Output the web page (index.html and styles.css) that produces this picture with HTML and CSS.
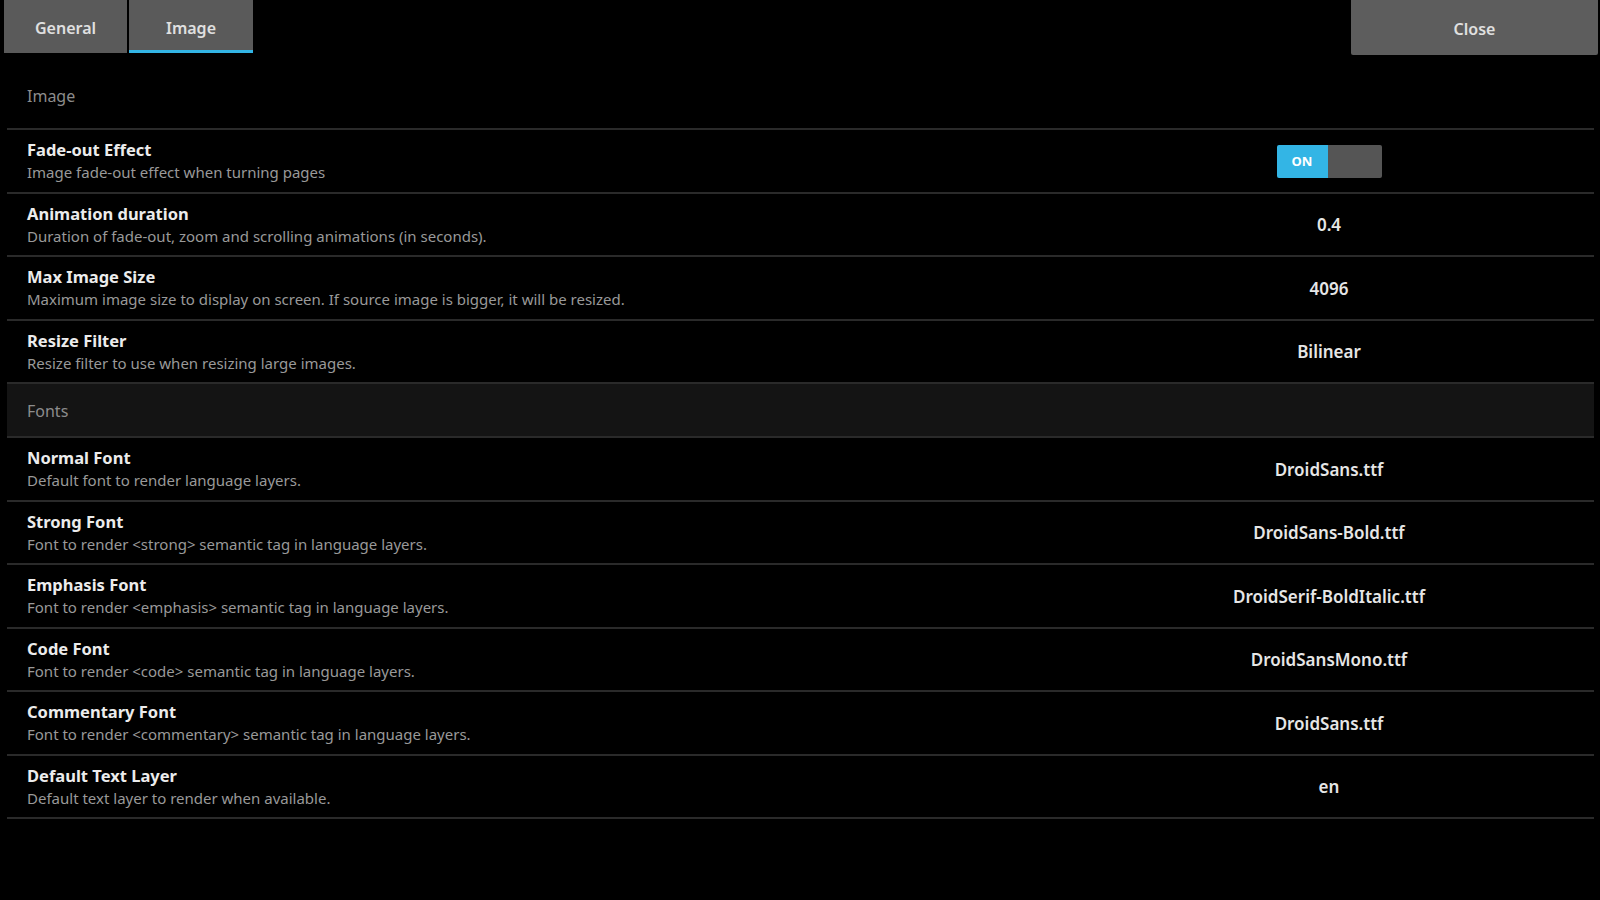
FILE: index.html
```html
<!DOCTYPE html>
<html lang="en">
<head>
<meta charset="utf-8">
<title>Settings - Image</title>
<link rel="stylesheet" href="styles.css">
</head>
<body>
<div class="topbar">
  <div class="tabs">
    <div class="tab">General</div>
    <div class="tab active">Image</div>
  </div>
  <div class="close">Close</div>
</div>

<div class="list">
  <div class="section first">Image</div>

  <div class="row">
    <div class="label">
      <div class="title">Fade-out Effect</div>
      <div class="desc">Image fade-out effect when turning pages</div>
    </div>
    <div class="value">
      <div class="toggle"><span class="on">ON</span><span class="off"></span></div>
    </div>
  </div>

  <div class="row">
    <div class="label">
      <div class="title">Animation duration</div>
      <div class="desc">Duration of fade-out, zoom and scrolling animations (in seconds).</div>
    </div>
    <div class="value">0.4</div>
  </div>

  <div class="row">
    <div class="label">
      <div class="title">Max Image Size</div>
      <div class="desc">Maximum image size to display on screen. If source image is bigger, it will be resized.</div>
    </div>
    <div class="value">4096</div>
  </div>

  <div class="row">
    <div class="label">
      <div class="title">Resize Filter</div>
      <div class="desc">Resize filter to use when resizing large images.</div>
    </div>
    <div class="value">Bilinear</div>
  </div>

  <div class="section band">Fonts</div>

  <div class="row">
    <div class="label">
      <div class="title">Normal Font</div>
      <div class="desc">Default font to render language layers.</div>
    </div>
    <div class="value">DroidSans.ttf</div>
  </div>

  <div class="row">
    <div class="label">
      <div class="title">Strong Font</div>
      <div class="desc">Font to render &lt;strong&gt; semantic tag in language layers.</div>
    </div>
    <div class="value">DroidSans-Bold.ttf</div>
  </div>

  <div class="row">
    <div class="label">
      <div class="title">Emphasis Font</div>
      <div class="desc">Font to render &lt;emphasis&gt; semantic tag in language layers.</div>
    </div>
    <div class="value">DroidSerif-BoldItalic.ttf</div>
  </div>

  <div class="row">
    <div class="label">
      <div class="title">Code Font</div>
      <div class="desc">Font to render &lt;code&gt; semantic tag in language layers.</div>
    </div>
    <div class="value">DroidSansMono.ttf</div>
  </div>

  <div class="row">
    <div class="label">
      <div class="title">Commentary Font</div>
      <div class="desc">Font to render &lt;commentary&gt; semantic tag in language layers.</div>
    </div>
    <div class="value">DroidSans.ttf</div>
  </div>

  <div class="row">
    <div class="label">
      <div class="title">Default Text Layer</div>
      <div class="desc">Default text layer to render when available.</div>
    </div>
    <div class="value">en</div>
  </div>
</div>
</body>
</html>
```

FILE: styles.css
```css
* { box-sizing: border-box; }

html, body {
  margin: 0;
  padding: 0;
  background: #000;
  width: 1600px;
  height: 900px;
  overflow: hidden;
}

body {
  font-family: "Noto Sans", "Open Sans", "DejaVu Sans", sans-serif;
  color: #e6e6e6;
}

.topbar {
  display: flex;
  justify-content: space-between;
  height: 55px;
}

.tabs {
  display: flex;
  gap: 2px;
  padding-left: 4px;
}

.tab {
  width: 123px;
  height: 53px;
  background: #5a5a5a;
  color: #e0e0e0;
  font-size: 16px;
  font-weight: 600;
  display: flex;
  align-items: center;
  justify-content: center;
  padding-top: 2px;
}

.tab.active {
  width: 124px;
  border-bottom: 3px solid #33b5e5;
  padding-top: 5px;
}

.close {
  width: 247px;
  height: 55px;
  margin-right: 2px;
  background: #5d5d5d;
  color: #e0e0e0;
  font-size: 16px;
  font-weight: 600;
  display: flex;
  align-items: center;
  justify-content: center;
  padding-top: 3px;
  border-bottom-left-radius: 2px;
  border-bottom-right-radius: 2px;
}

.list {
  margin: 0 6px 0 7px;
}

.section {
  color: #8c8c8c;
  font-size: 16px;
  line-height: 20px;
  padding-left: 20px;
  border-bottom: 2px solid #2a2a2a;
}

.section.first {
  height: 75px;
  padding-top: 31px;
}

.section.band {
  height: 54px;
  padding-top: 17px;
  background: #141414;
}

.row {
  display: flex;
  align-items: center;
  height: 63.5px;
  border-bottom: 2px solid #2a2a2a;
}

.label {
  flex: 1;
  padding-left: 20px;
  padding-top: 1px;
}

.title {
  font-size: 16.5px;
  font-weight: 700;
  line-height: 20px;
  color: #ececec;
}

.desc {
  font-size: 15px;
  line-height: 19px;
  margin-top: 3px;
  color: #999;
}

.value {
  width: 530px;
  text-align: center;
  font-size: 17px;
  font-weight: 600;
  color: #e6e6e6;
  display: flex;
  justify-content: center;
  padding-top: 1px;
}

.toggle {
  display: flex;
  width: 105px;
  height: 33px;
  border-radius: 2px;
  overflow: hidden;
}

.toggle .on {
  width: 51px;
  background: #33b5e5;
  color: #fff;
  font-size: 13px;
  font-weight: 700;
  display: flex;
  align-items: center;
  justify-content: center;
}

.toggle .off {
  flex: 1;
  background: #555;
}
```
